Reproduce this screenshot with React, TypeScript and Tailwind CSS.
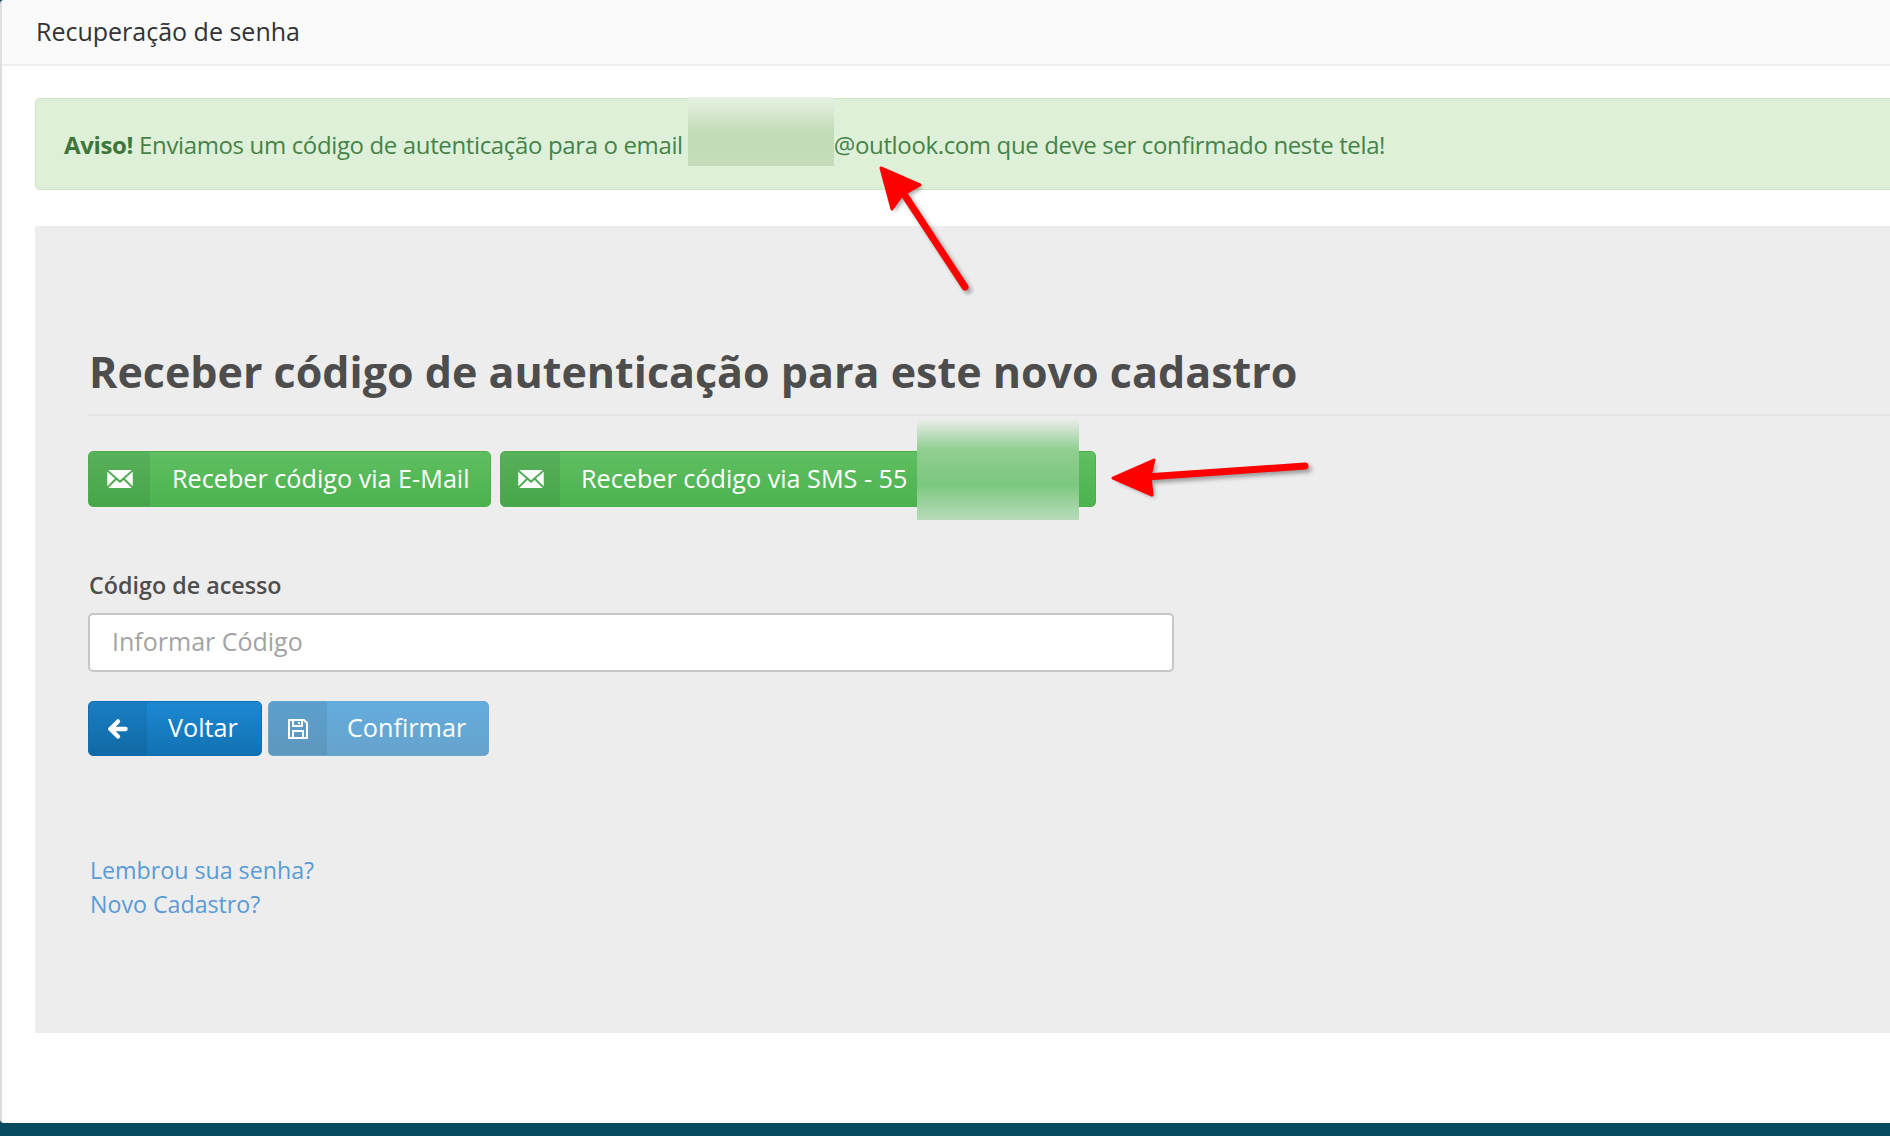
import React from "react";
import { ArrowLeft } from "lucide-react";

function Mail() {
  return (
    <svg viewBox="0 0 28 22" className="h-[20px] w-[26px]" fill="#fff">
      <path d="M1 1h26L14 12.5z" />
      <path d="M0 3l8.5 7.5L0 19z" />
      <path d="M28 3l-8.5 7.5L28 19z" />
      <path d="M1 21l9-9 4 3.5 4-3.5 9 9z" />
    </svg>
  );
}

function Save() {
  return (
    <svg viewBox="0 0 24 24" className="h-[24px] w-[24px]" fill="none" stroke="#fff" strokeWidth="2">
      <path d="M3 3h15l3 3v15H3z" strokeLinejoin="round" />
      <path d="M7 3v6h9V3M13 5v2M7 21v-7h10v7" />
    </svg>
  );
}

function IconButton({ icon, label, w, tint, iconW, textCls, children }: { icon: React.ReactNode; label: string; w: string; tint: string; iconW: string; textCls: string; children?: React.ReactNode }) {
  return (
    <button className={`relative flex items-stretch rounded-[5px] border text-white ${w} ${tint}`}>
      <span className={`flex items-center justify-center rounded-l-[4px] bg-black/[0.07] ${iconW}`}>{icon}</span>
      <span className={`flex items-center whitespace-nowrap pb-[1px] text-[25.2px] ${textCls}`}>{label}</span>
      {children}
    </button>
  );
}

function Arrow({ className, d, head, w, h }: { className: string; d: string; head: string; w: number; h: number }) {
  return (
    <svg className={`pointer-events-none absolute ${className}`} width={w} height={h} viewBox={`0 0 ${w} ${h}`}>
      <g transform="translate(3 3)" opacity="0.35" style={{ filter: "blur(2px)" }}>
        <path d={d} stroke="#000" strokeWidth="7" strokeLinecap="round" fill="none" />
        <path d={head} fill="#000" />
      </g>
      <path d={d} stroke="#ff0000" strokeWidth="7" strokeLinecap="round" fill="none" />
      <path d={head} fill="#ff0000" stroke="#ff0000" strokeWidth="3" strokeLinejoin="round" />
    </svg>
  );
}

export default function App() {
  return (
    <div className="relative flex h-[1136px] w-[1890px] flex-col overflow-hidden bg-[#064a60] font-['Open_Sans',sans-serif]">
      <div className="flex-1 rounded-l-[4px] border-l-[2px] border-[#dedede] bg-white">
        <div className="flex h-[66px] items-center rounded-tl-[3px] border-b-2 border-[#eeeeee] bg-[#fafafa] pl-[34px] text-[25px] text-[#333]">
          Recuperação de senha
        </div>
        <div className="pl-[33px]">
          <div className="relative mt-[32px] flex h-[92px] items-center rounded-l-[5px] border border-r-0 border-[#cfe5c0] bg-[#dff0d8] pl-[28px] pt-[2px] text-[24px] tracking-[-0.36px] text-[#45834a]">
            <strong className="font-bold text-[#3c763d]">Aviso!</strong>
            <span className="ml-[6px]">Enviamos um código de autenticação para o email</span>
            <span className="relative top-[-14px] ml-[5px] h-[69px] w-[146px] bg-gradient-to-b from-[#e8f1e4] via-[#c3dcb8] to-[#c4dcb9]" />
            <span>@outlook.com que deve ser confirmado neste tela!</span>
          </div>
          <div className="mt-[36px] h-[807px] bg-[#ededed] pl-[53px] pt-[112px]">
            <h1 className="pl-[1px] text-[43px] font-bold leading-[68px] text-[#4d4d4d]">Receber código de autenticação para este novo cadastro</h1>
            <div className="mt-[8px] h-[2px] bg-[#e5e5e5]" />
            <div className="mt-[35px] flex gap-[9px]">
              <IconButton icon={<Mail />} label="Receber código via E-Mail" w="h-[56px] w-[403px]" iconW="w-[61px]" textCls="pl-[22px]" tint="border-[#4cae4c] bg-gradient-to-b from-[#5fbf62] to-[#4cb24f]" />
              <IconButton icon={<Mail />} label="Receber código via SMS - 55" w="h-[56px] w-[596px]" iconW="w-[59px]" textCls="pl-[21px]" tint="border-[#4cae4c] bg-gradient-to-b from-[#5fbf62] to-[#4cb24f]">
                <span className="absolute left-[416px] top-[-32px] h-[100px] w-[162px] bg-[linear-gradient(to_bottom,#e9ece8,#8fce91_30%,#7cc77f_65%,#b9dcb9)]" />
              </IconButton>
            </div>
            <label className="mt-[62px] block pl-[1px] text-[23.3px] font-semibold leading-[32px] text-[#4d4d4d]">Código de acesso</label>
            <input placeholder="Informar Código" className="mt-[12px] block h-[59px] w-[1086px] rounded-[5px] border-2 border-[#c6c6c6] bg-white pb-[3px] pl-[22px] text-[25px] placeholder:text-[#a3a3a3]" />
            <div className="mt-[29px] flex gap-[6px]">
              <IconButton icon={<ArrowLeft size={26} strokeWidth={4} color="#fff" />} label="Voltar" w="h-[55px] w-[174px]" iconW="w-[58px]" textCls="pl-[21px]" tint="border-[#0f6fae] bg-gradient-to-b from-[#1c88d2] to-[#1272b2]" />
              <IconButton icon={<Save />} label="Confirmar" w="h-[55px] w-[221px]" iconW="w-[58px]" textCls="pl-[20px]" tint="border-[#66a7d3] bg-gradient-to-b from-[#64acde] to-[#66a3cc]" />
            </div>
            <div className="mt-[97px] flex flex-col pl-[2px] text-[23.2px] leading-[34px] text-[#5a9bd5]">
              <a>Lembrou sua senha?</a>
              <a>Novo Cadastro?</a>
            </div>
          </div>
        </div>
      </div>
      <div className="h-[13px] bg-[#064a60]" />
      <Arrow className="left-[868px] top-[160px]" w={110} h={140} d="M97 127 L28 22" head="M13 8 L52 25 L34 35 L24 49 Z" />
      <Arrow className="left-[1106px] top-[451px]" w={215} h={50} d="M199 15 L40 26" head="M7 27 L48 9 L44 25 L46 44 Z" />
    </div>
  );
}
